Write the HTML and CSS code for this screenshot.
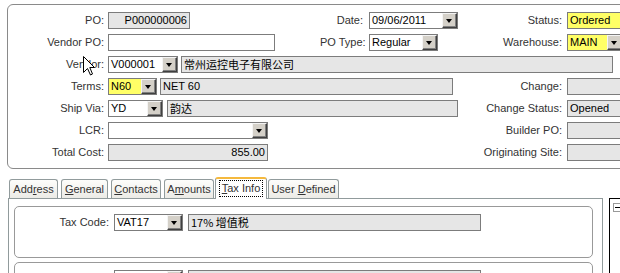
FILE: index.html
```html
<!DOCTYPE html>
<html lang="en">
<head>
  <meta charset="UTF-8">
  <title>Purchase Order</title>
  <link rel="stylesheet" href="styles.css">
</head>
<body>
  <div class="screen">

    <!-- header fields -->
    <div class="head-panel">
      <!-- row 1 -->
      <div class="cell"><span class="lbl">PO:</span><span class="field right w-po">P000000006</span></div>
      <div class="cell mid"><span class="lbl">Date:</span>
        <span class="combo edit w-date"><span class="val">09/06/2011</span><span class="btn"></span></span></div>
      <div class="cell side"><span class="lbl">Status:</span><span class="field hl w-side">Ordered</span></div>

      <!-- row 2 -->
      <div class="cell"><span class="lbl">Vendor PO:</span><span class="field edit w-vpo"></span></div>
      <div class="cell mid"><span class="lbl">PO Type:</span>
        <span class="combo edit w-type"><span class="val">Regular</span><span class="btn"></span></span></div>
      <div class="cell side"><span class="lbl">Warehouse:</span>
        <span class="combo hl w-wh"><span class="val">MAIN</span><span class="btn"></span></span></div>

      <!-- row 3 -->
      <div class="cell span-all"><span class="lbl">Vendor:</span>
        <span class="combo edit w-vendor"><span class="val">V000001</span><span class="btn"></span></span>
        <span class="field cjk w-vname">常州运控电子有限公司</span></div>

      <!-- row 4 -->
      <div class="cell span-two"><span class="lbl">Terms:</span>
        <span class="combo hl w-terms"><span class="val">N60</span><span class="btn"></span></span>
        <span class="field w-tname">NET 60</span></div>
      <div class="cell side"><span class="lbl">Change:</span><span class="field w-side"></span></div>

      <!-- row 5 -->
      <div class="cell span-two"><span class="lbl">Ship Via:</span>
        <span class="combo edit w-ship"><span class="val">YD</span><span class="btn"></span></span>
        <span class="field cjk w-sname">韵达</span></div>
      <div class="cell side"><span class="lbl">Change Status:</span><span class="field w-side">Opened</span></div>

      <!-- row 6 -->
      <div class="cell span-two"><span class="lbl">LCR:</span>
        <span class="combo edit w-lcr"><span class="val"></span><span class="btn"></span></span></div>
      <div class="cell side"><span class="lbl">Builder PO:</span><span class="field w-side"></span></div>

      <!-- row 7 -->
      <div class="cell span-two"><span class="lbl">Total Cost:</span><span class="field right w-lcr">855.00</span></div>
      <div class="cell side"><span class="lbl">Originating Site:</span><span class="field w-side"></span></div>
    </div>

    <!-- tabs -->
    <div class="tabs">
      <span class="tab w-t1">Add<u>r</u>ess</span>
      <span class="tab w-t2"><u>G</u>eneral</span>
      <span class="tab w-t3"><u>C</u>ontacts</span>
      <span class="tab w-t4 pre">A<u>m</u>ounts</span>
      <span class="tab w-t5 sel"><span class="focus"><u>T</u>ax Info</span></span>
      <span class="tab w-t6">User <u>D</u>efined</span>
    </div>

    <div class="lower">
      <div class="tab-page">
        <div class="group">
          <div class="tax-row"><span class="lbl">Tax Code:</span>
            <span class="combo edit w-tax"><span class="val">VAT17</span><span class="btn"></span></span>
            <span class="field cjk w-taxname">17% 增值税</span></div>
        </div>
        <div class="group">
          <div class="tax-row"><span class="lbl"></span>
            <span class="combo edit w-tax"><span class="val"></span><span class="btn"></span></span>
            <span class="field w-taxname"></span></div>
        </div>
      </div>
      <div class="tree"><span class="toggle"></span></div>
    </div>

    <!-- mouse pointer -->
    <svg class="cursor" width="13" height="20" viewBox="0 0 13 20">
      <path d="M0.5 0.5 L0.5 16.5 L4.5 12.5 L7.5 19 L9.5 18 L6.8 11.5 L11.5 11.5 Z" fill="#fff" stroke="#000" stroke-width="1"/>
    </svg>
  </div>
</body>
</html>
```

FILE: styles.css
```css
* {
  margin: 0;
  padding: 0;
  box-sizing: border-box;
}

html, body {
  width: 620px;
  height: 273px;
  overflow: hidden;
  background: #fff;
  font-family: "Liberation Sans", Arial, "Noto Sans CJK SC", sans-serif;
  font-size: 11px;
  color: #000;
}

.screen {
  position: relative;
  padding: 4px 0 0 7px;
}

/* top panel */
.head-panel {
  width: 660px;
  height: 165px;
  border: 1px solid #8a8a8a;
  border-radius: 6px;
  padding: 7px 0 0 0;
  display: grid;
  grid-template-columns: 312px 160px 1fr;
  grid-template-rows: repeat(7, 17px);
  row-gap: 5px;
}

.cell {
  display: flex;
  align-items: center;
  gap: 4px;
  white-space: nowrap;
}

.cell .lbl {
  width: 96px;
}

.cell.mid { gap: 6px; }
.cell.mid .lbl { width: 43px; }

.cell.side {
  grid-column: 3;
  gap: 5px;
}
.cell.side .lbl { width: 82px; }

.span-all { grid-column: 1 / 4; }
.span-two { grid-column: 1 / 3; }

.lbl {
  flex: 0 0 auto;
  text-align: right;
  color: #333;
  line-height: 17px;
}

/* inputs */
.field, .combo {
  flex: 0 0 auto;
  height: 17px;
  border: 1px solid #7c7c7c;
  background: #e6e6e6;
  line-height: 15px;
  overflow: hidden;
  white-space: nowrap;
}

.field {
  padding: 0 2px;
}

.field.right { text-align: right; }
.edit { background: #fff; }
.hl { background: #ffff66; }
.cjk { font-family: "Noto Sans CJK SC", sans-serif; font-size: 11px; line-height: 15px; }

.combo {
  display: flex;
}

.combo .val {
  flex: 1;
  padding: 0 2px;
}

.combo .btn {
  position: relative;
  width: 15px;
  height: 15px;
  background: #d4d0c8;
  border: 1px solid;
  border-color: #f4f4f4 #404040 #404040 #f4f4f4;
  box-shadow: inset -1px -1px 0 #808080;
}

.combo .btn::after {
  content: "";
  position: absolute;
  left: 3px;
  top: 5px;
  border-left: 3.5px solid transparent;
  border-right: 3.5px solid transparent;
  border-top: 4px solid #000;
}

.w-po { width: 82px; }
.w-vpo { width: 167px; }
.w-date { width: 89px; }
.w-type { width: 69px; }
.w-side { width: 70px; }
.w-wh { width: 56px; }
.w-vendor { width: 70px; }
.w-vname { width: 432px; margin-left: -1px; }
.w-terms { width: 49px; }
.w-tname { width: 293px; margin-left: -1px; }
.w-ship { width: 55px; }
.w-sname { width: 291px; }
.w-lcr { width: 160px; }

/* tabs */
.tabs {
  display: flex;
  align-items: flex-end;
  height: 21px;
  margin: 8px 0 0 2px;
  position: relative;
  z-index: 2;
}

.tab {
  height: 19px;
  margin-right: 3px;
  border: 1px solid #919b9c;
  border-bottom: none;
  border-radius: 3px 3px 0 0;
  background: linear-gradient(#fdfdfb, #ecebe6);
  color: #333;
  text-align: center;
  line-height: 18px;
  white-space: nowrap;
}

.tab.pre { margin-right: 1px; }

.tab.sel {
  height: 22px;
  margin-right: 1px;
  margin-bottom: -1px;
  background: #fff;
  border-top: 2px solid #f5b93e;
  line-height: 18px;
}

.tab .focus {
  display: inline-block;
  padding: 0 2px;
  line-height: 15px;
  border: 1px dotted #000;
}

.w-t1 { width: 49px; }
.w-t2 { width: 47px; }
.w-t3 { width: 50px; }
.w-t4 { width: 50px; }
.w-t5 { width: 52px; }
.w-t6 { width: 71px; }

/* tab body */
.lower {
  display: flex;
  gap: 6px;
  margin-left: 1px;
  width: 660px;
}

.tab-page {
  flex: none;
  width: 595px;
  height: 110px;
  border: 1px solid #919b9c;
  padding: 7px 9px 0 5px;
  display: flex;
  flex-direction: column;
  gap: 4px;
}

.group {
  height: 52px;
  border: 1px solid #999;
  border-radius: 5px;
  padding-top: 7px;
  flex: 0 0 auto;
}

.tax-row {
  display: flex;
  align-items: center;
  gap: 5px;
}

.tax-row .lbl { width: 94px; }
.w-tax { width: 69px; }
.w-taxname { width: 293px; }

.tree {
  flex: none;
  width: 40px;
  height: 110px;
  border: 1px solid #000;
  background: #fff;
  padding: 4px 0 0 3px;
}

.toggle {
  display: block;
  position: relative;
  width: 9px;
  height: 9px;
  border: 1px solid #999;
}

.toggle::after {
  content: "";
  position: absolute;
  left: 1px;
  top: 3px;
  width: 5px;
  height: 1px;
  background: #000;
}

.cursor {
  position: absolute;
  left: 83px;
  top: 56px;
}
```
